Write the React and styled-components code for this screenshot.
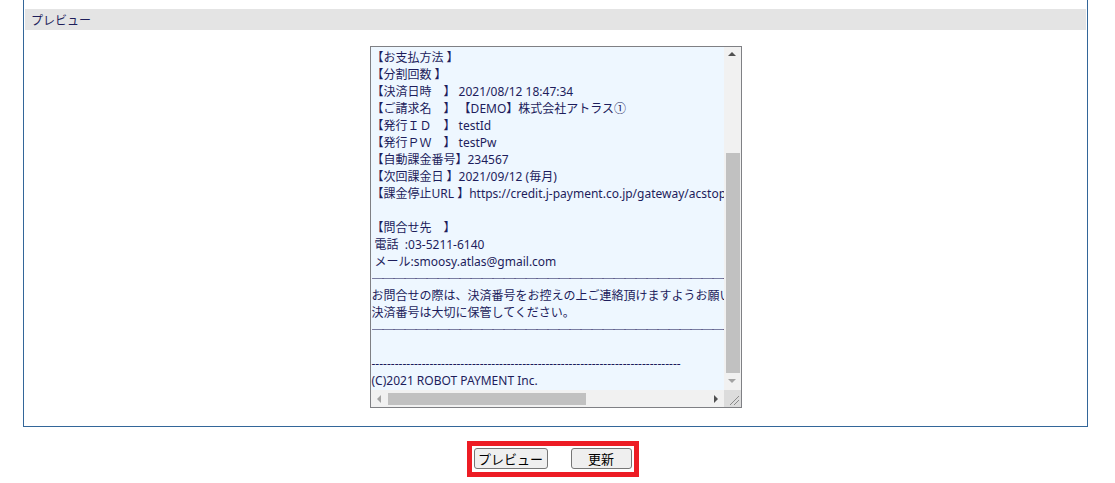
import React from "react";
import styled, { createGlobalStyle } from "styled-components";

const GlobalStyle = createGlobalStyle`
  html, body { margin: 0; padding: 0; background: #ffffff; }
  body { font-family: "Noto Sans", "Noto Sans CJK JP", sans-serif; }
`;

const Page = styled.div`
  display: flex;
  flex-direction: column;
  align-items: stretch;
  height: 483px;
  overflow: hidden;
`;

const Panel = styled.section`
  margin: 0 27px 0 23px;
  border: 1px solid #336699;
  border-top: none;
  padding: 9px 1px 18px 1px;
  display: flex;
  flex-direction: column;
`;

const PanelHeader = styled.div`
  height: 21px;
  line-height: 21px;
  background: #e4e4e4;
  padding-left: 6px;
  font-size: 12px;
  color: #1e1e5a;
  font-family: "Noto Sans CJK JP", sans-serif;
`;

const PanelBody = styled.div`
  display: flex;
  justify-content: center;
  padding-top: 16px;
`;

const TextBox = styled.div`
  width: 370px;
  height: 360px;
  border: 1px solid #7f8084;
  display: grid;
  grid-template-columns: 1fr 17px;
  grid-template-rows: 1fr 17px;
`;

const Content = styled.div`
  overflow: hidden;
  background: #eef7ff;
  padding: 2px 0 0 1px;
  font-family: "Noto Sans", "Noto Sans CJK JP", sans-serif;
  font-size: 12px;
  line-height: 17px;
  color: #1d1d5c;
`;

const Line = styled.div`
  white-space: pre;
  height: 17px;
`;

const Rule = styled.div`
  height: 17px;
  display: flex;
  align-items: center;
  white-space: pre;
  overflow: hidden;
  font-family: "Noto Sans CJK JP", sans-serif;
  font-weight: 700;
  letter-spacing: -1px;
  color: #14145a;
`;

const VBar = styled.div`
  background: #f1f1f1;
  display: flex;
  flex-direction: column;
`;

const HBar = styled.div`
  background: #f1f1f1;
  display: flex;
  align-items: center;
`;

const ArrowBtn = styled.div`
  width: 17px;
  height: 17px;
  flex: none;
  display: flex;
  align-items: center;
  justify-content: center;
`;

const VTrack = styled.div`
  flex: 1;
  display: flex;
  flex-direction: column;
  justify-content: flex-end;
  align-items: center;
`;

const VThumb = styled.div`
  width: 14px;
  height: 220px;
  background: #c1c1c1;
  margin-left: 1px;
`;

const HTrack = styled.div`
  flex: 1;
  height: 17px;
  display: flex;
  align-items: center;
`;

const HThumb = styled.div`
  width: 198px;
  height: 12px;
  background: #c1c1c1;
`;

const Corner = styled.div`
  background: #dcdcdc;
  display: flex;
  align-items: flex-end;
  justify-content: flex-end;
`;

const Actions = styled.div`
  display: flex;
  justify-content: center;
  margin-top: 14px;
  padding-right: 10px;
`;

const Highlight = styled.div`
  border: 5px solid #ed1c24;
  padding: 2px 2px 3px 2px;
  display: flex;
  gap: 23px;
`;

const Button = styled.button`
  width: ${(p) => p.$w}px;
  height: 21px;
  padding: 0;
  border: 1px solid #767676;
  border-radius: 3px;
  background: #efefef;
  color: #000;
  font-family: "Noto Sans CJK JP", sans-serif;
  font-size: 13px;
  line-height: 19px;
  display: flex;
  align-items: center;
  justify-content: center;
`;

const Arrow = ({ dir, dark }) => {
  const c = dark ? "#505050" : "#a3a3a3";
  const pts = {
    up: "4,8 8,4 12,8",
    down: "4,5 8,9 12,5",
    left: "10,4 6,8 10,12",
    right: "7,4 11,8 7,12",
  }[dir];
  return (
    <svg width="16" height="16" viewBox="0 0 16 16">
      <polygon points={pts} fill={c} />
    </svg>
  );
};

const RULE = "─".repeat(40);
const DASHES = "-".repeat(80);

const lines = [
  "【お支払方法 】",
  "【分割回数 】",
  "【決済日時　】 2021/08/12 18:47:34",
  "【ご請求名　】 【DEMO】株式会社アトラス①",
  "【発行ＩＤ　】 testId",
  "【発行ＰＷ　】 testPw",
  "【自動課金番号】234567",
  "【次回課金日 】2021/09/12 (毎月)",
  "【課金停止URL 】https://credit.j-payment.co.jp/gateway/acstop.aspx",
  "",
  "【問合せ先　】",
  " 電話  :03-5211-6140",
  " メール:smoosy.atlas@gmail.com",
  { rule: true },
  "お問合せの際は、決済番号をお控えの上ご連絡頂けますようお願い致します。",
  "決済番号は大切に保管してください。",
  { rule: true },
  "",
  DASHES,
  "(C)2021 ROBOT PAYMENT Inc.",
];

export default function App() {
  return (
    <>
      <GlobalStyle />
      <Page>
        <Panel>
          <PanelHeader>プレビュー</PanelHeader>
          <PanelBody>
            <TextBox>
              <Content>
                {lines.map((l, i) =>
                  typeof l === "string" ? (
                    <Line key={i}>{l || " "}</Line>
                  ) : (
                    <Rule key={i}>{RULE}</Rule>
                  )
                )}
              </Content>
              <VBar>
                <ArrowBtn>
                  <Arrow dir="up" dark />
                </ArrowBtn>
                <VTrack>
                  <VThumb />
                </VTrack>
                <ArrowBtn>
                  <Arrow dir="down" />
                </ArrowBtn>
              </VBar>
              <HBar>
                <ArrowBtn>
                  <Arrow dir="left" />
                </ArrowBtn>
                <HTrack>
                  <HThumb />
                </HTrack>
                <ArrowBtn>
                  <Arrow dir="right" dark />
                </ArrowBtn>
              </HBar>
              <Corner>
                <svg width="17" height="17" viewBox="0 0 17 17">
                  <line x1="6" y1="15" x2="15" y2="6" stroke="#8a8a8a" strokeWidth="1" />
                  <line x1="10" y1="15" x2="15" y2="10" stroke="#8a8a8a" strokeWidth="1" />
                </svg>
              </Corner>
            </TextBox>
          </PanelBody>
        </Panel>
        <Actions>
          <Highlight>
            <Button $w={74}>プレビュー</Button>
            <Button $w={61}>更新</Button>
          </Highlight>
        </Actions>
      </Page>
    </>
  );
}
